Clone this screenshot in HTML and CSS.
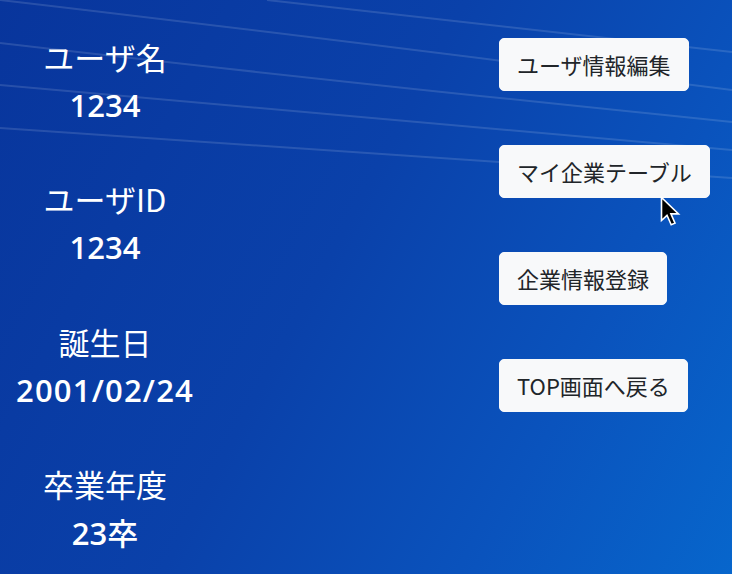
FILE: index.html
```html
<!DOCTYPE html>
<html lang="ja">
<head>
<meta charset="utf-8">
<title>マイページ</title>
<link rel="stylesheet" href="styles.css">
</head>
<body>
<svg class="wallpaper" width="732" height="574" viewBox="0 0 732 574" aria-hidden="true">
  <g stroke="#ffffff" stroke-opacity="0.13" stroke-width="2" fill="none">
    <path d="M267 0 L732 52"/>
    <path d="M0 0 Q300 35 732 90"/>
    <path d="M0 43 Q300 78 732 122"/>
    <path d="M0 85 Q300 113 732 150"/>
    <path d="M0 128 Q300 150 732 178"/>
  </g>
</svg>
<main class="page">
  <section class="profile">
    <div class="item">
      <div class="label">ユーザ名</div>
      <div class="value">1234</div>
    </div>
    <div class="item">
      <div class="label">ユーザID</div>
      <div class="value">1234</div>
    </div>
    <div class="item">
      <div class="label">誕生日</div>
      <div class="value date">2001/02/24</div>
    </div>
    <div class="item">
      <div class="label">卒業年度</div>
      <div class="value">23<span class="unit">卒</span></div>
    </div>
  </section>
  <nav class="actions">
    <button class="btn" type="button">ユーザ情報編集</button>
    <button class="btn" type="button">マイ企業テーブル</button>
    <button class="btn" type="button">企業情報登録</button>
    <button class="btn" type="button">TOP画面へ戻る</button>
  </nav>
</main>
<svg class="cursor" width="22" height="32" viewBox="0 0 22 32" aria-hidden="true">
  <path d="M1.5 1.5 L1.5 24.5 L7 19.3 L11.2 28.8 L15 27.2 L10.9 17.9 L18.5 17.9 Z" fill="#000" stroke="#fff" stroke-width="1.6" stroke-linejoin="miter"/>
</svg>
</body>
</html>
```
FILE: styles.css
```css
html, body {
  margin: 0;
  padding: 0;
}
body {
  width: 732px;
  height: 574px;
  overflow: hidden;
  position: relative;
  background: linear-gradient(118deg, #08359c 0%, #0a41aa 45%, #0a53bd 75%, #0766cc 100%);
  font-family: "Noto Sans CJK JP", "Noto Sans", sans-serif;
}
.wallpaper {
  position: absolute;
  left: 0;
  top: 0;
  z-index: 0;
}
.page {
  position: relative;
  z-index: 1;
  display: flex;
  align-items: flex-start;
}
.profile {
  width: 210px;
  padding-top: 33px;
  display: flex;
  flex-direction: column;
  gap: 46.4px;
  color: #ffffff;
  text-align: center;
}
.label {
  font-size: 31px;
  line-height: 48px;
  font-weight: 400;
}
.value {
  font-family: "Open Sans", "Noto Sans CJK JP", sans-serif;
  font-size: 31px;
  line-height: 48px;
  font-weight: 600;
}
.date {
  letter-spacing: 1.2px;
}
.unit {
  font-family: "Noto Sans CJK JP", sans-serif;
  font-weight: 500;
}
.actions {
  margin-left: 289px;
  padding-top: 38px;
  display: flex;
  flex-direction: column;
  align-items: flex-start;
  gap: 54px;
}
.btn {
  font-family: "Noto Sans CJK JP", "Noto Sans", sans-serif;
  font-size: 22px;
  line-height: 27px;
  padding: 12px 17px;
  color: #212529;
  background: #f8f9fa;
  border: 1px solid #f8f9fa;
  border-radius: 5px;
  white-space: nowrap;
}
.cursor {
  position: absolute;
  left: 660px;
  top: 196px;
  z-index: 2;
}
```
